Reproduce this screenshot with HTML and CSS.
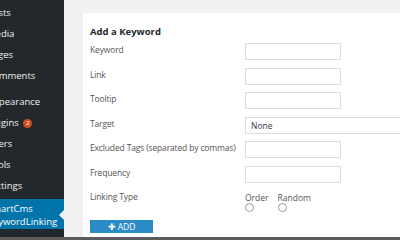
FILE: index.html
```html
<!DOCTYPE html>
<html lang="en">
<head>
    <meta charset="UTF-8">
    <title>SmartCms Keyword Linking</title>
    <link rel="stylesheet" href="styles.css">
</head>
<body>
    <div class="admin">
        <div class="sidebar">
            <ul class="menu">
                <li>Posts</li>
                <li>Media</li>
                <li>Pages</li>
                <li>Comments</li>
                <li class="sep"></li>
                <li>Appearance</li>
                <li>Plugins <span class="badge">2</span></li>
                <li>Users</li>
                <li>Tools</li>
                <li>Settings</li>
                <li class="current">SmartCms<br>KeywordLinking</li>
            </ul>
        </div>

        <div class="main">
            <div class="card">
                <h3>Add a Keyword</h3>
                <form class="form">
                    <label>Keyword</label>
                    <input type="text" class="field">

                    <label>Link</label>
                    <input type="text" class="field">

                    <label>Tooltip</label>
                    <input type="text" class="field">

                    <label>Target</label>
                    <div class="select">None</div>

                    <label>Excluded Tags (separated by commas)</label>
                    <input type="text" class="field">

                    <label>Frequency</label>
                    <input type="text" class="field">

                    <label>Linking Type</label>
                    <div class="radios">
                        <div class="radio"><span>Order</span><i></i></div>
                        <div class="radio"><span>Random</span><i></i></div>
                    </div>
                </form>
                <button type="button" class="add">&#10010; ADD</button>
            </div>
        </div>
    </div>
</body>
</html>
```

FILE: styles.css
```css
body {
    margin: 0;
    font-family: "Open Sans", Arial, sans-serif;
    background-color: #f1f1f1;
}
.admin {
    display: flex;
    width: 400px;
    height: 240px;
    overflow: hidden;
    border-bottom: 3px solid #5b5b5b;
    box-sizing: border-box;
}
.sidebar {
    width: 64px;
    flex-shrink: 0;
    background-color: #23282d;
    overflow: hidden;
}
.menu {
    list-style: none;
    margin: 2px 0 0 -13px;
    padding: 0;
    color: #eeeeee;
    font-size: 9.5px;
}
.menu li {
    height: 21px;
    line-height: 21px;
    white-space: nowrap;
}
.menu li.sep {
    height: 5px;
}
.badge {
    display: inline-block;
    width: 9px;
    height: 9px;
    line-height: 9px;
    border-radius: 50%;
    background-color: #d54e21;
    color: #fff;
    font-size: 6px;
    text-align: center;
    vertical-align: 1px;
    margin-left: 2px;
}
.menu li.current {
    position: relative;
    height: 30px;
    line-height: 13px;
    padding-top: 3px;
    margin-top: 3px;
    margin-left: -20px;
    padding-left: 20px;
    background-color: #0073aa;
    color: #fff;
    box-sizing: border-box;
}
.menu li.current::after {
    content: "";
    position: absolute;
    right: 0;
    top: 11px;
    border: 5px solid transparent;
    border-right-color: #f1f1f1;
}
.main {
    flex: 1;
    padding: 13px 0 0 19px;
}
.card {
    background-color: #fff;
    height: 100%;
    padding: 12px 0 0 7px;
    box-sizing: border-box;
}
h3 {
    margin: 0 0 5px;
    font-size: 9.5px;
    color: #23282d;
}
.form {
    display: grid;
    grid-template-columns: 155px 1fr;
    grid-auto-rows: 24.5px;
    align-items: start;
    color: #555;
    font-size: 8.5px;
}
.form label {
    padding-top: 1px;
    white-space: nowrap;
    letter-spacing: -0.15px;
}
.field {
    width: 96px;
    height: 17px;
    margin: 0;
    padding: 0;
    border: 1px solid #dddddd;
    box-sizing: border-box;
}
.select {
    height: 17px;
    line-height: 15px;
    padding-left: 5px;
    border: 1px solid #dddddd;
    border-right: none;
    box-sizing: border-box;
    color: #32373c;
}
.radios {
    display: flex;
    gap: 9px;
    padding-top: 2px;
}
.radio {
    display: flex;
    flex-direction: column;
    line-height: 11px;
}
.radio i {
    width: 7px;
    height: 7px;
    border: 1px solid #999;
    border-radius: 50%;
}
.add {
    display: block;
    width: 63px;
    height: 13px;
    margin-top: 5px;
    padding: 0;
    border: none;
    background-color: #2a8bc6;
    color: #fff;
    font-family: inherit;
    font-size: 8.5px;
    line-height: 13px;
}
```
